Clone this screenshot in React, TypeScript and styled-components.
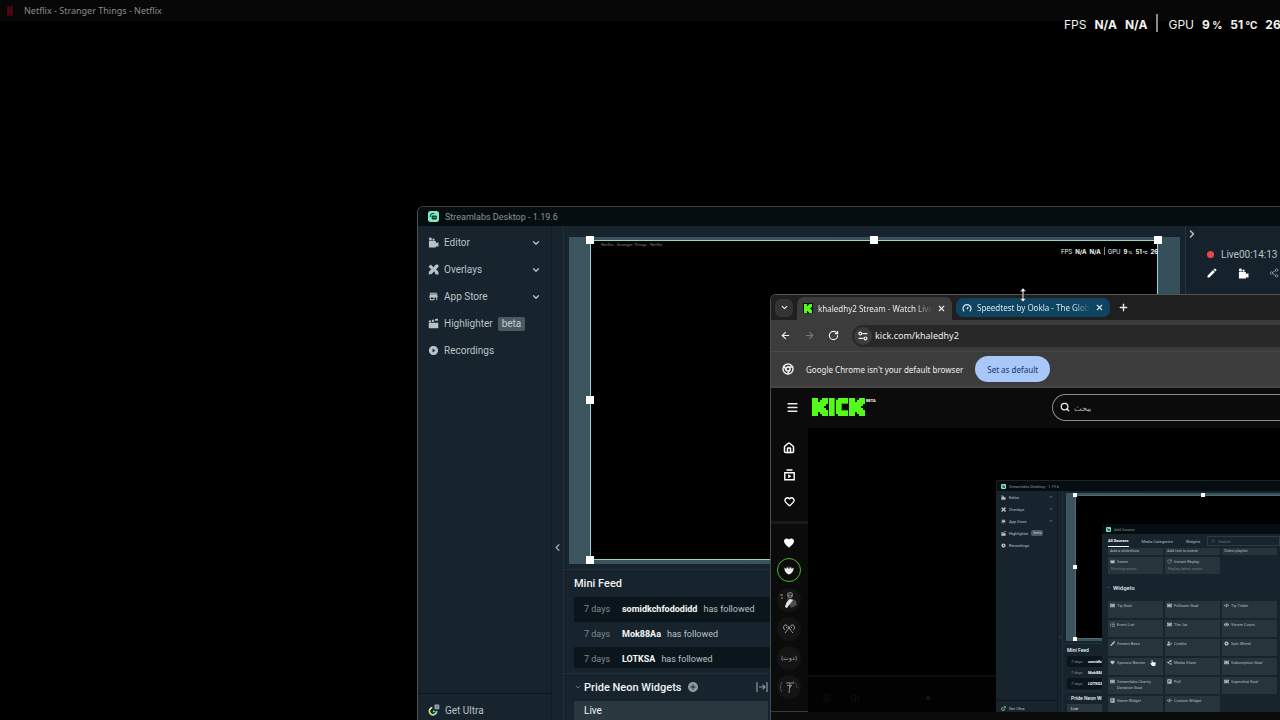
import React from 'react';
import styled, { createGlobalStyle, css } from 'styled-components';
import { SiNetflix } from 'react-icons/si';
import { MdStore, MdEdit, MdMovie, MdPlayCircleFilled, MdAddCircle, MdFavorite } from 'react-icons/md';
import { FaPaintBrush, FaShareAlt, FaTicketAlt, FaListUl, FaUserPlus, FaEye, FaCode, FaPollH, FaHandPointer } from 'react-icons/fa';
import {
  ChevronDown, ChevronLeft, ChevronRight, X, Plus, ArrowLeft, ArrowRight, RotateCw, Chrome, Menu, Search,
  House, Heart, Share2, Pause, Volume1,
} from 'lucide-react';

const GlobalStyle = createGlobalStyle`
  * { box-sizing: border-box; }
  body { margin: 0; background: #000; }
  button, input { font: inherit; color: inherit; border: 0; padding: 0; margin: 0; background: none; outline: none; }
  a { color: inherit; text-decoration: none; }
  ul { list-style: none; margin: 0; padding: 0; }
  h1, h2, p { margin: 0; font-size: inherit; font-weight: inherit; }
  svg { display: block; flex: none; }
`;

const ui = '"Noto Sans", "Open Sans", sans-serif';
const app = 'Roboto, sans-serif';

const Desktop = styled.div`
  position: relative;
  height: 100vh;
  min-height: 720px;
  overflow: hidden;
  background: #000;
  font-family: ${ui};
`;

const NetflixBar = styled.header`
  display: flex;
  align-items: center;
  gap: 9px;
  height: 21px;
  padding-left: 5px;
  background: #070707;
  color: #8b8b8b;
  font-size: 9px;
  svg { color: #5c0714; }
`;

const Stats = styled.div<{ $mini?: boolean }>`
  position: absolute;
  display: flex;
  align-items: center;
  white-space: nowrap;
  font-family: Inter, sans-serif;
  color: #f2f2f2;
  overflow: hidden;
  right: 0;
  ${(p) => p.$mini
    ? css`top: 5px; left: 471px; height: 12px; gap: 3px; font-size: 6px;`
    : css`top: 12px; left: 1064px; height: 22px; gap: 8px; font-size: 12px; line-height: 22px; padding-top: 3px;`}
  b { font-weight: 700; }
  small { font-size: ${(p) => (p.$mini ? 4 : 10)}px; }
`;

const StatRule = styled.i<{ $mini?: boolean }>`
  flex: none;
  width: ${(p) => (p.$mini ? 1 : 2)}px;
  height: ${(p) => (p.$mini ? 8 : 18)}px;
  margin: ${(p) => (p.$mini ? '0' : '-4px 2px 0 1px')};
  background: #8a8a8a;
`;

const StreamWindow = styled.section<{ $mini?: boolean }>`
  position: absolute;
  display: flex;
  flex-direction: column;
  right: 0;
  bottom: 0;
  overflow: hidden;
  font-family: ${app};
  background: #17242d;
  color: #b9c2c6;
  ${(p) => p.$mini
    ? css`left: 188px; top: 52px; font-size: 4px; border-left: 1px solid #16242a; border-top: 1px solid #1d2526; border-radius: 3px 0 0 0;`
    : css`left: 417px; top: 206px; font-size: 10px; border-left: 1px solid #4a5052; border-top: 1px solid #3c4244; border-radius: 6px 0 0 0;`}
`;

const TitleBar = styled.header<{ $mini?: boolean }>`
  display: flex;
  flex: none;
  align-items: center;
  background: #050d11;
  color: #8b9396;
  gap: ${(p) => (p.$mini ? 3 : 6)}px;
  height: ${(p) => (p.$mini ? 10 : 19)}px;
  padding-left: ${(p) => (p.$mini ? 4 : 10)}px;
  font-size: ${(p) => (p.$mini ? 4 : 9)}px;
`;

const Columns = styled.div`
  display: flex;
  flex: 1;
  min-height: 0;
`;

const SideNav = styled.nav<{ $mini?: boolean }>`
  display: flex;
  flex: none;
  flex-direction: column;
  width: ${(p) => (p.$mini ? 61 : 134)}px;
  padding-top: ${(p) => (p.$mini ? 0 : 3)}px;
  border-right: 1px solid #121c23;
`;

const NavItem = styled.a<{ $mini?: boolean }>`
  display: flex;
  align-items: center;
  gap: ${(p) => (p.$mini ? 3 : 5)}px;
  height: ${(p) => (p.$mini ? 12 : 27)}px;
  padding: ${(p) => (p.$mini ? '0 4px' : '0 10px')};
  svg:last-child:not(:first-child) { margin-left: auto; }
`;

const Beta = styled.span<{ $mini?: boolean }>`
  background: #4b5a62;
  color: #c3ccd0;
  border-radius: 2px;
  padding: ${(p) => (p.$mini ? '0 2px' : '1px 4px')};
  line-height: ${(p) => (p.$mini ? 6 : 12)}px;
`;

const NavFoot = styled.div`
  margin-top: auto;
  border-top: 1px solid #0b151b;
`;

const UltraLink = styled(NavItem)`
  height: ${(p) => (p.$mini ? 11 : 26)}px;
  padding-top: ${(p) => (p.$mini ? 3 : 6)}px;
`;

const Gutter = styled.button<{ $mini?: boolean }>`
  display: flex;
  flex: none;
  align-items: center;
  justify-content: flex-start;
  width: ${(p) => (p.$mini ? 5 : 12)}px;
  padding-top: ${(p) => (p.$mini ? 70 : 148)}px;
  color: #9aa5aa;
  border-right: 1px solid #202e36;
`;

const Editor = styled.main`
  display: flex;
  flex: 1;
  flex-direction: column;
  min-width: 0;
`;

const Stage = styled.div<{ $mini?: boolean }>`
  flex: none;
  background: linear-gradient(90deg, #3b545e, #35505a);
  margin: ${(p) => (p.$mini ? '2px 0 0 3px' : '11px 5px 0 5px')};
  padding: ${(p) => (p.$mini ? '2px 0 2px 9px' : '3px 22px 4px 21px')};
  ${(p) => p.$mini && css`width: 275px;`}
`;

const Canvas = styled.div<{ $mini?: boolean }>`
  position: relative;
  aspect-ratio: 16 / 9;
  background: #000;
  box-shadow: inset 0 0 0 1px ${(p) => (p.$mini ? '#4f6a70' : '#8fd6cf')};
  ${(p) => p.$mini && css`width: 256px;`}
`;

const Handle = styled.i<{ $x: string; $y: string; $mini?: boolean }>`
  position: absolute;
  left: ${(p) => p.$x};
  top: ${(p) => p.$y};
  width: ${(p) => (p.$mini ? 4 : 8)}px;
  height: ${(p) => (p.$mini ? 4 : 8)}px;
  transform: translate(-50%, -50%);
  background: #fff;
`;

const CanvasTitle = styled.span`
  display: block;
  padding: 2px 0 0 11px;
  font-family: ${ui};
  font-size: 4px;
  line-height: 6px;
  color: #8a8484;
`;

const Feed = styled.section<{ $mini?: boolean }>`
  flex: none;
  margin-top: ${(p) => (p.$mini ? 2 : 5)}px;
  padding: ${(p) => (p.$mini ? '0 0 2px 4px' : '0 0 5px 10px')};
  border-top: 1px solid #22323a;
`;

const FeedTitle = styled.h2<{ $mini?: boolean }>`
  color: #eef2f3;
  font-weight: 500;
  font-size: ${(p) => (p.$mini ? 5 : 11)}px;
  line-height: ${(p) => (p.$mini ? 12 : 27)}px;
`;

const FeedList = styled.ul<{ $mini?: boolean }>`
  height: ${(p) => (p.$mini ? 33 : 71)}px;
  overflow: hidden;
  font-size: ${(p) => (p.$mini ? 4 : 9)}px;
`;

const FeedRow = styled.li<{ $mini?: boolean }>`
  display: flex;
  align-items: center;
  height: ${(p) => (p.$mini ? 11 : 25)}px;
  padding-left: ${(p) => (p.$mini ? 4 : 10)}px;
  gap: ${(p) => (p.$mini ? 3 : 6)}px;
  white-space: nowrap;
  &:nth-child(odd) { background: #0b161c; }
  time { width: ${(p) => (p.$mini ? 14 : 32)}px; color: #7f8b91; }
  b { color: #f4f6f7; font-weight: 700; }
`;

const Scenes = styled.section<{ $mini?: boolean }>`
  border-top: 1px solid #22323a;
  padding-left: ${(p) => (p.$mini ? 4 : 10)}px;
  width: ${(p) => (p.$mini ? 90 : 204)}px;
`;

const ScenesHead = styled.header<{ $mini?: boolean }>`
  display: flex;
  align-items: center;
  gap: ${(p) => (p.$mini ? 1 : 2)}px;
  height: ${(p) => (p.$mini ? 12 : 27)}px;
  color: #eef2f3;
  font-size: ${(p) => (p.$mini ? 5 : 11)}px;
  h2 { font-weight: 500; white-space: nowrap; }
  svg { color: #8d989d; }
  button { margin-left: 4px; }
  button:last-child { margin-left: auto; }
`;

const SceneItem = styled.div<{ $mini?: boolean }>`
  height: ${(p) => (p.$mini ? 10 : 20)}px;
  line-height: ${(p) => (p.$mini ? 10 : 20)}px;
  padding-left: ${(p) => (p.$mini ? 4 : 10)}px;
  background: #2a3840;
  color: #eef2f3;
`;

const LivePanel = styled.aside`
  flex: none;
  width: 95px;
  border-left: 1px solid #263640;
  background: #16222b;
  overflow: hidden;
`;

const LiveStatus = styled.p`
  display: flex;
  align-items: center;
  height: 28px;
  padding-left: 21px;
  white-space: nowrap;
  i { width: 7px; height: 7px; margin-right: 7px; border-radius: 50%; background: #e5484d; }
`;

const LiveActions = styled.div`
  display: flex;
  align-items: center;
  gap: 20px;
  padding-left: 20px;
  height: 10px;
  color: #fff;
`;

const PanelToggle = styled.button`
  display: block;
  height: 14px;
  padding-top: 1px;
`;

const Browser = styled.section`
  position: absolute;
  left: 770px;
  top: 294px;
  right: 0;
  bottom: 0;
  display: flex;
  flex-direction: column;
  overflow: hidden;
  border-left: 1px solid #4a4a4a;
  border-top: 1px solid #555;
  border-radius: 6px 0 0 0;
  background: #0b0b0b;
  color: #ececec;
  font-size: 8px;
`;

const TabStrip = styled.div`
  display: flex;
  flex: none;
  align-items: center;
  height: 25px;
  padding-left: 4px;
  background: #1f1f1f;
`;

const TabSearch = styled.button`
  display: grid;
  place-items: center;
  width: 18px;
  height: 18px;
  margin-right: 4px;
  border-radius: 6px;
  background: #333;
`;

const Tab = styled.div<{ $active?: boolean }>`
  display: flex;
  align-items: center;
  gap: 5px;
  padding: 0 6px;
  ${(p) => p.$active
    ? css`width: 155px; height: 23px; align-self: flex-end; padding-bottom: 1px; border-radius: 7px 7px 0 0; background: #3c3c3c;`
    : css`width: 154px; height: 19px; margin-left: 4px; border-radius: 7px; background: #0f4460; color: #d6e6ef;`}
  button { margin-left: auto; }
`;

const TabName = styled.span`
  flex: 1;
  overflow: hidden;
  white-space: nowrap;
  mask-image: linear-gradient(90deg, #000 85%, transparent);
`;

const NewTab = styled.button`
  margin-left: 8px;
`;

const Toolbar = styled.div`
  display: flex;
  flex: none;
  align-items: center;
  gap: 13px;
  height: 31px;
  padding-left: 9px;
  background: #3c3c3c;
`;

const Omnibox = styled.label`
  display: flex;
  flex: 1;
  align-items: center;
  gap: 3px;
  height: 22px;
  padding-left: 2px;
  border-radius: 11px 0 0 11px;
  background: #282828;
  font-size: 9px;
  input { flex: 1; min-width: 0; }
`;

const SiteInfo = styled.span`
  display: grid;
  place-items: center;
  width: 18px;
  height: 18px;
  border-radius: 50%;
  background: #3c3c3c;
`;

const InfoBar = styled.div`
  display: flex;
  flex: none;
  align-items: center;
  gap: 12px;
  height: 37px;
  padding-left: 11px;
  border-top: 1px solid #484848;
  border-bottom: 2px solid #464646;
  background: #3c3c3c;
`;

const DefaultButton = styled.button`
  height: 26px;
  padding: 0 12px;
  border-radius: 13px;
  background: #a8c7fa;
  color: #17356c;
`;

const SiteHeader = styled.header`
  display: flex;
  flex: none;
  align-items: center;
  height: 40px;
  padding: 0 0 2px 15px;
  background: #0b0b0b;
`;

const Logo = styled.a`
  display: flex;
  margin-left: 13px;
  gap: 1px;
  sup { font: 700 4px/5px ${app}; color: #fff; }
`;

const SiteSearch = styled.label`
  display: flex;
  align-items: center;
  gap: 4px;
  flex: 1;
  height: 27px;
  margin-left: 176px;
  padding-left: 7px;
  border: 1px solid #8a8a8a;
  border-right: 0;
  border-radius: 14px 0 0 14px;
  input { width: 60px; }
  input::placeholder { color: #b5b5b5; opacity: 1; }
`;

const SiteBody = styled.div`
  display: flex;
  flex: 1;
  min-height: 0;
  padding-bottom: 8px;
`;

const SiteNav = styled.nav`
  display: flex;
  flex: none;
  flex-direction: column;
  width: 37px;
  border-bottom: 1px solid #3a3a3a;
  color: #fff;
`;

const SiteGroup = styled.div`
  display: flex;
  flex-direction: column;
  align-items: center;
  padding: 14px 1px 14px 0;
  gap: 15px;
  & + & { border-top: 3px solid #1b1b1b; padding-top: 13px; gap: 5px; }
`;

const Avatar = styled.a<{ $live?: boolean }>`
  display: grid;
  place-items: center;
  width: 24px;
  height: 24px;
  border-radius: 50%;
  font: 6px/8px ${app};
  color: #b5b5b5;
  background: ${(p) => (p.$live ? '#0b0b0b' : '#141414')};
  ${(p) => p.$live && css`width: 22px; height: 22px; outline: 1px solid #4dbb2a; color: #eee; margin: 5px 0 2px;`}
`;

const Player = styled.main`
  position: relative;
  flex: 1;
  display: flex;
  flex-direction: column;
  justify-content: flex-end;
  background: #000;
  overflow: hidden;
`;

const PlayerBar = styled.div`
  display: flex;
  align-items: center;
  gap: 18px;
  height: 37px;
  padding: 6px 0 0 14px;
  border-top: 2px solid #0c100c;
  background: #020202;
  color: #101010;
`;

const LiveDot = styled.i`
  width: 4px;
  height: 4px;
  margin-left: 46px;
  border-radius: 50%;
  background: #111c10;
`;

const Dialog = styled.section`
  position: absolute;
  left: 105px;
  top: 43px;
  right: 0;
  bottom: 0;
  overflow: hidden;
  border-radius: 3px 0 0 0;
  background: #17242d;
  color: #b4bdc1;
`;

const DialogTabs = styled.div`
  display: flex;
  align-items: center;
  gap: 13px;
  height: 14px;
  padding-left: 6px;
  button[aria-selected='true'] { color: #fff; font-weight: 700; border-bottom: 1px solid #fff; }
  button { height: 12px; white-space: nowrap; }
`;

const SourceSearch = styled.label`
  display: flex;
  flex: 1;
  align-items: center;
  gap: 3px;
  height: 10px;
  margin-left: -6px;
  padding-left: 3px;
  border: 1px solid #2c3b43;
  color: #66737a;
  input { width: 40px; }
  input::placeholder { color: #66737a; opacity: 1; }
`;

const Cards = styled.div`
  display: grid;
  grid-template-columns: repeat(3, 55px);
  gap: 2px;
  padding-left: 6px;
`;

const Card = styled.button<{ $cut?: boolean }>`
  display: flex;
  align-items: flex-start;
  gap: 2px;
  height: ${(p) => (p.$cut ? 7 : 17)}px;
  padding: ${(p) => (p.$cut ? '0 2px' : '2px')};
  overflow: hidden;
  background: #26343b;
  text-align: left;
  line-height: 6px;
  small { display: block; font-size: 4px; color: #6f7b80; margin-left: -6px; line-height: 7px; }
`;

const DialogHeading = styled.h2`
  display: flex;
  align-items: center;
  gap: 3px;
  height: 27px;
  padding-left: 5px;
  color: #dfe5e7;
  font-size: 6px;
  font-weight: 500;
`;

const Cursor = styled.svg`
  position: absolute;
  left: 1018px;
  top: 287px;
`;

const HandCursor = styled.span`
  position: absolute;
  left: 48px;
  top: 136px;
  color: #fff;
`;

const AppMark = ({ size }: { size: number }) => (
  <svg width={size} height={size} viewBox="0 0 12 12">
    <rect width="12" height="12" rx="3" fill="#7fecc4" />
    <path d="M2.6 6.6V5.4a2.6 2.6 0 0 1 2.6-2.6h1.6" fill="none" stroke="#12382f" strokeWidth="1.2" />
    <rect x="4" y="4.8" width="5.6" height="4.4" rx="1.4" fill="#12382f" />
    <path d="M6.2 6.4v1.2M7.8 6.4v1.2" stroke="#7fecc4" strokeWidth=".8" />
  </svg>
);

const EditorIcon = ({ size }: { size: number }) => (
  <svg width={size} height={size} viewBox="0 0 12 12" fill="currentColor">
    <circle cx="2.6" cy="2.2" r="1.6" />
    <circle cx="6" cy="2.8" r="1.2" />
    <path d="M1 4h6.6a1 1 0 0 1 1 1v1.6l2.8-.8v4.8L8.6 10v1.4H1z" />
  </svg>
);

const BrushIcon = ({ size }: { size: number }) => (
  <svg width={size} height={size} viewBox="0 0 12 12" fill="currentColor">
    <path d="M.6 3 3 .6l3 3-2.4 2.4zM6.6 7.2l1.8-1.8 3 3v3h-3z" />
    <path d="M8.8.6h1.6l1 1v1.8L4 10.8l-3.4.6.6-3.2z" />
  </svg>
);

const ClapperIcon = ({ size }: { size: number }) => (
  <svg width={size} height={size} viewBox="0 0 12 12" fill="currentColor">
    <path d="M.8 5.2h10.4v6H.8zM.7 3 2.9 2.5l.7 2L.9 4.7zM4 2.2l2.2-.6.7 2.1-2.2.6zM7.4 1.3 10.6.6l.5 2-3 .8z" />
  </svg>
);

const UltraIcon = ({ size }: { size: number }) => (
  <svg width={size} height={size} viewBox="0 0 14 14" fill="none">
    <path d="M2.4 6A4.2 4.2 0 0 0 7 12.4" stroke="#c8e86a" strokeWidth="2" />
    <path d="M7 12.4A4.2 4.2 0 0 0 10 8" stroke="#7fe3b4" strokeWidth="2" />
    <path d="M2 6.6A4.2 4.2 0 0 1 5 4M6 8.6h1.6" stroke="#f1f4f5" strokeWidth="1.8" />
    <rect x="7.6" y=".6" width="5.6" height="5.6" rx="1" fill="#9aa5aa" />
    <path d="m9.4 4.6 2.2-2.4" stroke="#34424a" strokeWidth="1" />
  </svg>
);

const blockK: number[][] = [
  [0, 0, 3, 9], [3, 2, 1, 5], [4, 1, 1, 7], [5, 0, 3, 3], [5, 3, 2, 1], [5, 4, 1, 1], [5, 5, 2, 1], [5, 6, 3, 3],
];

const KickMark = () => (
  <svg width="10" height="10" viewBox="0 0 10 10" shapeRendering="crispEdges">
    <rect width="10" height="10" fill="#07120a" />
    <g fill="#53fc18" transform="translate(1 .5)">
      {blockK.map(([x, y, w, h], i) => <rect key={i} x={x} y={y} width={w} height={h} />)}
    </g>
  </svg>
);

const KickLogo = () => (
  <svg width="53" height="18" viewBox="0 0 159 54" fill="#53fc18">
    {[0, 111].map((left) => (
      <g key={left} transform={`translate(${left} 0) scale(6)`}>
        {blockK.map(([x, y, w, h], i) => <rect key={i} x={x} y={y} width={w} height={h} />)}
      </g>
    ))}
    <rect x="51" width="17" height="54" />
    <rect x="72" y="6" width="17" height="42" />
    <rect x="78" width="30" height="17" />
    <rect x="78" y="37" width="30" height="17" />
  </svg>
);

const TuneIcon = () => (
  <svg width="10" height="10" viewBox="0 0 10 10" fill="none" stroke="currentColor" strokeWidth="1.2">
    <path d="M4.4 2.6H9.4M.6 7.4h5" />
    <circle cx="2.3" cy="2.6" r="1.4" />
    <circle cx="7.5" cy="7.4" r="1.4" />
  </svg>
);

const GaugeIcon = () => (
  <svg width="10" height="10" viewBox="0 0 10 10" fill="none" stroke="currentColor" strokeWidth="1.2">
    <path d="M2.2 8.4a4 4 0 1 1 5.6 0M4.8 6.2l1.6-2.4" />
  </svg>
);

const ChannelsIcon = () => (
  <svg width="11" height="12" viewBox="0 0 11 12" fill="none" stroke="#fff" strokeWidth="1.4">
    <path d="M2.5 1h6M.8 3.7h9.4v7H.8z" />
    <path d="M4.2 5.2v4l3.2-2z" fill="#fff" stroke="none" />
  </svg>
);

const TransitionIcon = ({ size }: { size: number }) => (
  <svg width={size} height={size} viewBox="0 0 12 12" fill="none" stroke="currentColor" strokeWidth="1.2">
    <path d="M1 1v10M11 1v10M3 6h6M6.6 3.6 9 6 6.6 8.4" />
  </svg>
);

const WingEmblem = () => (
  <svg width="10" height="10" viewBox="0 0 10 10" fill="currentColor">
    <path d="M.4 2.4 2.4 4l.6-2.6L4.6 4 5 1l.6 3L7 1.4 7.6 4l2-1.6C9.6 6.4 8 8.2 5 9.4 2 8.2.4 6.4.4 2.4z" />
  </svg>
);

const PortraitArt = () => (
  <svg width="20" height="20" viewBox="0 0 20 20">
    <path d="M1 5h3M2 8h2" stroke="#999" />
    <circle cx="11" cy="5" r="3" fill="#777" />
    <path d="M8 8c3 1 6 0 9 3l1 4-6 3z" fill="#4c4c4c" />
    <path d="m11 9 3 1-6 8-2-1c1-4 2-6 5-8z" fill="#e2e2e2" />
    <path d="M9 4h4M10 6h2" stroke="#161616" />
  </svg>
);

const LoopArt = () => (
  <svg width="14" height="12" viewBox="0 0 14 12" fill="none" stroke="#a4a4a4" strokeWidth="1">
    <path d="M3 7C1 6 1 2 3.6 2S8 7 11 10M11 7c2-1 2-5-.6-5S6 7 3 10" />
    <path d="M4 4.4h1M9 4.4h1" />
  </svg>
);

const TowerArt = () => (
  <svg width="18" height="16" viewBox="0 0 18 16" fill="none" stroke="#8c8c8c" strokeWidth="1">
    <path d="M2 3C0 6 0 10 2 13" stroke="#555" />
    <path d="M6 4h8M7 6.4h5M10 4l-1 10M11.4 6l-1.6 3" />
    <path d="M13 2c2 1 4 4 4 7" stroke="#444" />
  </svg>
);

const StreamSidebar = ({ mini }: { mini?: boolean }) => {
  const s = mini ? 5 : 11;
  const chevron = <ChevronDown size={mini ? 4 : 10} strokeWidth={3} />;
  return (
    <SideNav $mini={mini}>
      <NavItem href="#editor" $mini={mini}><EditorIcon size={s} />Editor{chevron}</NavItem>
      <NavItem href="#overlays" $mini={mini}><BrushIcon size={s} />Overlays{chevron}</NavItem>
      <NavItem href="#store" $mini={mini}><MdStore size={s} />App Store{chevron}</NavItem>
      <NavItem href="#highlighter" $mini={mini}><ClapperIcon size={s} />Highlighter<Beta $mini={mini}>beta</Beta></NavItem>
      <NavItem href="#recordings" $mini={mini}><MdPlayCircleFilled size={s} />Recordings</NavItem>
      <NavFoot>
        <UltraLink href="#ultra" $mini={mini}><UltraIcon size={mini ? 5 : 12} />Get Ultra</UltraLink>
      </NavFoot>
    </SideNav>
  );
};

const followers = ['somidkchfododidd', 'Mok88Aa', 'LOTKSA'];

const FeedAndScenes = ({ mini }: { mini?: boolean }) => (
  <>
    <Feed $mini={mini}>
      <FeedTitle $mini={mini}>Mini Feed</FeedTitle>
      <FeedList $mini={mini}>
        {followers.map((name) => (
          <FeedRow key={name} $mini={mini}><time>7 days</time><b>{name}</b>{!mini && 'has followed'}</FeedRow>
        ))}
      </FeedList>
    </Feed>
    <Scenes $mini={mini}>
      <ScenesHead $mini={mini}>
        <ChevronDown size={mini ? 3 : 8} />
        <h2>Pride Neon Widgets</h2>
        <button aria-label="Add scene"><MdAddCircle size={mini ? 5 : 12} /></button>
        <button aria-label="Transitions"><TransitionIcon size={mini ? 5 : 12} /></button>
      </ScenesHead>
      <SceneItem $mini={mini}>Live</SceneItem>
    </Scenes>
  </>
);

const StatLine = ({ mini }: { mini?: boolean }) => (
  <Stats $mini={mini}>
    <span>FPS</span><b>N/A</b><b>N/A</b><StatRule $mini={mini} />
    <span>GPU</span><b>9<small> %</small></b><b>51<small> °C</small></b><b>26</b>
  </Stats>
);

const widgets: [React.ReactNode, string][] = [
  [<FaTicketAlt size={5} />, 'Tip Goal'], [<FaTicketAlt size={5} />, 'Follower Goal'], [<FaCode size={5} />, 'Tip Ticker'],
  [<FaListUl size={5} />, 'Event List'], [<FaTicketAlt size={5} />, 'The Jar'], [<FaEye size={5} />, 'Viewer Count'],
  [<FaPaintBrush size={5} />, 'Stream Boss'], [<FaUserPlus size={5} />, 'Credits'], [<MdPlayCircleFilled size={5} />, 'Spin Wheel'],
  [<MdFavorite size={5} />, 'Sponsor Banner'], [<FaShareAlt size={5} />, 'Media Share'], [<FaTicketAlt size={5} />, 'Subscription Goal'],
  [<FaTicketAlt size={5} />, 'Streamlabs Charity Donation Goal'], [<FaPollH size={5} />, 'Poll'], [<FaTicketAlt size={5} />, 'Superchat Goal'],
  [<FaPollH size={5} />, 'Game Widget'], [<FaCode size={5} />, 'Custom Widget'],
];

const AddSource = () => (
  <Dialog aria-label="Add Source">
    <TitleBar $mini><AppMark size={5} />Add Source</TitleBar>
    <DialogTabs role="tablist">
      <button role="tab" aria-selected="true">All Sources</button>
      <button role="tab" aria-selected="false">Media Categories</button>
      <button role="tab" aria-selected="false">Widgets</button>
      <SourceSearch><Search size={4} /><input placeholder="Search" aria-label="Search sources" /></SourceSearch>
    </DialogTabs>
    <Cards>
      <Card $cut>Add a slideshow</Card><Card $cut>Add text to scene</Card><Card $cut>Video playlist</Card>
      <Card><MdMovie size={5} /><span>Scene<small>Existing scene</small></span></Card>
      <Card><RotateCw size={5} /><span>Instant Replay<small>Replay latest scene</small></span></Card>
    </Cards>
    <DialogHeading><ChevronDown size={3} />Widgets</DialogHeading>
    <Cards>
      {widgets.map(([icon, name]) => <Card key={name}>{icon}<span>{name}</span></Card>)}
    </Cards>
    <HandCursor><FaHandPointer size={6} /></HandCursor>
  </Dialog>
);

const StreamlabsWindow = () => (
  <StreamWindow aria-label="Streamlabs Desktop">
    <TitleBar><AppMark size={11} /><h1>Streamlabs Desktop - 1.19.6</h1></TitleBar>
    <Columns>
      <StreamSidebar />
      <Gutter aria-label="Collapse sidebar"><ChevronLeft size={11} strokeWidth={3} /></Gutter>
      <Editor>
        <Stage>
          <Canvas>
            <CanvasTitle>Netflix - Stranger Things - Netflix</CanvasTitle>
            <StatLine mini />
            {[['0', '0'], ['50%', '0'], ['100%', '0'], ['0', '50%'], ['0', '100%']].map(([x, y]) => (
              <Handle key={x + y} $x={x} $y={y} />
            ))}
          </Canvas>
        </Stage>
        <FeedAndScenes />
      </Editor>
      <LivePanel>
        <PanelToggle aria-label="Collapse live panel"><ChevronRight size={12} strokeWidth={3} /></PanelToggle>
        <LiveStatus><i /><span>Live</span><span>00:14:13</span></LiveStatus>
        <LiveActions><MdEdit size={12} /><EditorIcon size={11} /><Share2 size={10} color="#8d989d" /></LiveActions>
      </LivePanel>
    </Columns>
  </StreamWindow>
);

const StreamPicture = () => (
  <StreamWindow $mini aria-label="Stream picture">
    <TitleBar $mini><AppMark size={5} />Streamlabs Desktop - 1.19.6</TitleBar>
    <Columns>
      <StreamSidebar mini />
      <Gutter $mini aria-label="Collapse"><ChevronLeft size={4} /></Gutter>
      <Editor>
        <Stage $mini>
          <Canvas $mini>
            {[['0', '0'], ['50%', '0'], ['0', '50%'], ['0', '100%']].map(([x, y]) => (
              <Handle key={x + y} $x={x} $y={y} $mini />
            ))}
          </Canvas>
        </Stage>
        <FeedAndScenes mini />
      </Editor>
    </Columns>
    <AddSource />
  </StreamWindow>
);

const BrowserWindow = () => (
  <Browser aria-label="Browser">
    <TabStrip>
      <TabSearch aria-label="Search tabs"><ChevronDown size={9} strokeWidth={3} /></TabSearch>
      <Tab $active><KickMark /><TabName>khaledhy2 Stream - Watch Live</TabName><button aria-label="Close tab"><X size={9} strokeWidth={3} /></button></Tab>
      <Tab><GaugeIcon /><TabName>Speedtest by Ookla - The Glob</TabName><button aria-label="Close tab"><X size={9} strokeWidth={3} /></button></Tab>
      <NewTab aria-label="New tab"><Plus size={11} strokeWidth={3} /></NewTab>
    </TabStrip>
    <Toolbar>
      <button aria-label="Back"><ArrowLeft size={11} strokeWidth={2.5} /></button>
      <button aria-label="Forward"><ArrowRight size={11} strokeWidth={2.5} color="#777" /></button>
      <button aria-label="Reload"><RotateCw size={11} strokeWidth={2.5} /></button>
      <Omnibox><SiteInfo><TuneIcon /></SiteInfo><input aria-label="Address" defaultValue="kick.com/khaledhy2" /></Omnibox>
    </Toolbar>
    <InfoBar>
      <Chrome size={12} strokeWidth={3} />
      <span>Google Chrome isn't your default browser</span>
      <DefaultButton>Set as default</DefaultButton>
    </InfoBar>
    <SiteHeader>
      <button aria-label="Menu"><Menu size={13} strokeWidth={3} /></button>
      <Logo href="#home" aria-label="Kick"><KickLogo /><sup>BETA</sup></Logo>
      <SiteSearch><Search size={10} strokeWidth={3} /><input dir="auto" placeholder="يبحث" aria-label="Search" /></SiteSearch>
    </SiteHeader>
    <SiteBody>
      <SiteNav>
        <SiteGroup>
          <House size={12} strokeWidth={3} />
          <ChannelsIcon />
          <Heart size={11} strokeWidth={3} />
        </SiteGroup>
        <SiteGroup>
          <MdFavorite size={12} />
          <Avatar href="#c1" $live aria-label="Live channel"><WingEmblem /></Avatar>
          <Avatar href="#c2" aria-label="Channel"><PortraitArt /></Avatar>
          <Avatar href="#c3" aria-label="Channel"><LoopArt /></Avatar>
          <Avatar href="#c4">(دوت)</Avatar>
          <Avatar href="#c5" aria-label="Channel"><TowerArt /></Avatar>
        </SiteGroup>
      </SiteNav>
      <Player>
        <PlayerBar><Pause size={10} /><Volume1 size={12} /><LiveDot /></PlayerBar>
        <StreamPicture />
      </Player>
    </SiteBody>
  </Browser>
);

export default function App() {
  return (
    <>
      <GlobalStyle />
      <Desktop>
        <NetflixBar><SiNetflix size={10} /><span>Netflix - Stranger Things - Netflix</span></NetflixBar>
        <StatLine />
        <StreamlabsWindow />
        <BrowserWindow />
        <Cursor width="10" height="16" viewBox="0 0 10 16">
          <path d="M5 1 8 4.4H5.8v7.2H8L5 15l-3-3.4h2.2V4.4H2z" fill="#fff" stroke="#222" strokeWidth=".6" />
        </Cursor>
      </Desktop>
    </>
  );
}
